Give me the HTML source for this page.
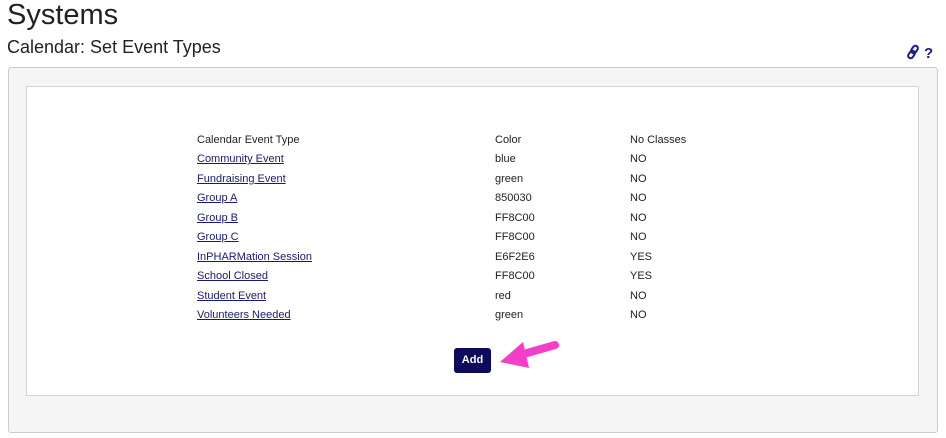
<!DOCTYPE html>
<html><head><style>
body{margin:0;width:946px;height:438px;background:#fff;font-family:"Liberation Sans",Arial,sans-serif;position:relative;overflow:hidden}
.h1{position:absolute;left:7px;top:-1px;font-size:29px;color:#222;font-weight:300}
.h2{position:absolute;left:7px;top:37px;font-size:18px;color:#222}
.outer{position:absolute;left:8px;top:67px;width:928px;height:364px;background:#f5f5f5;border:1px solid #ccc;border-radius:3px}
.inner{position:absolute;left:26px;top:86px;width:891px;height:308px;background:#fff;border:1px solid #d4d4d4}
.r{position:absolute;left:0;width:946px}
.t{position:absolute;font-size:11px;color:#222;line-height:13px;top:0}
a{color:#1a1a6e;text-decoration:underline}
.btn{position:absolute;left:454px;top:348px;width:37px;height:25px;background:#0e0a5c;color:#fff;font-size:11px;font-weight:bold;text-align:center;line-height:25px;border-radius:3px}
</style></head><body>
<div class="h1">Systems</div>
<div class="h2">Calendar: Set Event Types</div>
<svg style="position:absolute;left:906px;top:44px" width="34" height="18"><g fill="none" stroke="#1a1a8e" stroke-width="2"><rect x="6" y="1.5" width="5" height="8" rx="2.5" transform="rotate(35 8.5 5.5)"/><rect x="3" y="6.5" width="5" height="8" rx="2.5" transform="rotate(35 5.5 10.5)"/></g><text x="18" y="14" font-family="Liberation Sans" font-weight="bold" font-size="15" fill="#1a1a8e">?</text></svg>
<div class="outer"></div>
<div class="inner"></div>
<div class="t" style="left:197px;top:134px">Calendar Event Type</div>
<div class="t" style="left:495px;top:134px">Color</div>
<div class="t" style="left:630px;top:134px">No Classes</div>
<div class="t" style="left:197px;top:153px"><a>Community Event</a></div><div class="t" style="left:495px;top:153px">blue</div><div class="t" style="left:630px;top:153px">NO</div>
<div class="t" style="left:197px;top:173px"><a>Fundraising Event</a></div><div class="t" style="left:495px;top:173px">green</div><div class="t" style="left:630px;top:173px">NO</div>
<div class="t" style="left:197px;top:192px"><a>Group A</a></div><div class="t" style="left:495px;top:192px">850030</div><div class="t" style="left:630px;top:192px">NO</div>
<div class="t" style="left:197px;top:212px"><a>Group B</a></div><div class="t" style="left:495px;top:212px">FF8C00</div><div class="t" style="left:630px;top:212px">NO</div>
<div class="t" style="left:197px;top:231px"><a>Group C</a></div><div class="t" style="left:495px;top:231px">FF8C00</div><div class="t" style="left:630px;top:231px">NO</div>
<div class="t" style="left:197px;top:251px"><a>InPHARMation Session</a></div><div class="t" style="left:495px;top:251px">E6F2E6</div><div class="t" style="left:630px;top:251px">YES</div>
<div class="t" style="left:197px;top:270px"><a>School Closed</a></div><div class="t" style="left:495px;top:270px">FF8C00</div><div class="t" style="left:630px;top:270px">YES</div>
<div class="t" style="left:197px;top:290px"><a>Student Event</a></div><div class="t" style="left:495px;top:290px">red</div><div class="t" style="left:630px;top:290px">NO</div>
<div class="t" style="left:197px;top:309px"><a>Volunteers Needed</a></div><div class="t" style="left:495px;top:309px">green</div><div class="t" style="left:630px;top:309px">NO</div>
<div class="btn">Add</div>
<svg style="position:absolute;left:495px;top:336px" width="75" height="40"><path d="M60 9 L25 19" stroke="#f43ec8" stroke-width="8" stroke-linecap="round"/><path d="M5 26 L28 6 L34 32 Z" fill="#f43ec8"/></svg>
</body></html>
